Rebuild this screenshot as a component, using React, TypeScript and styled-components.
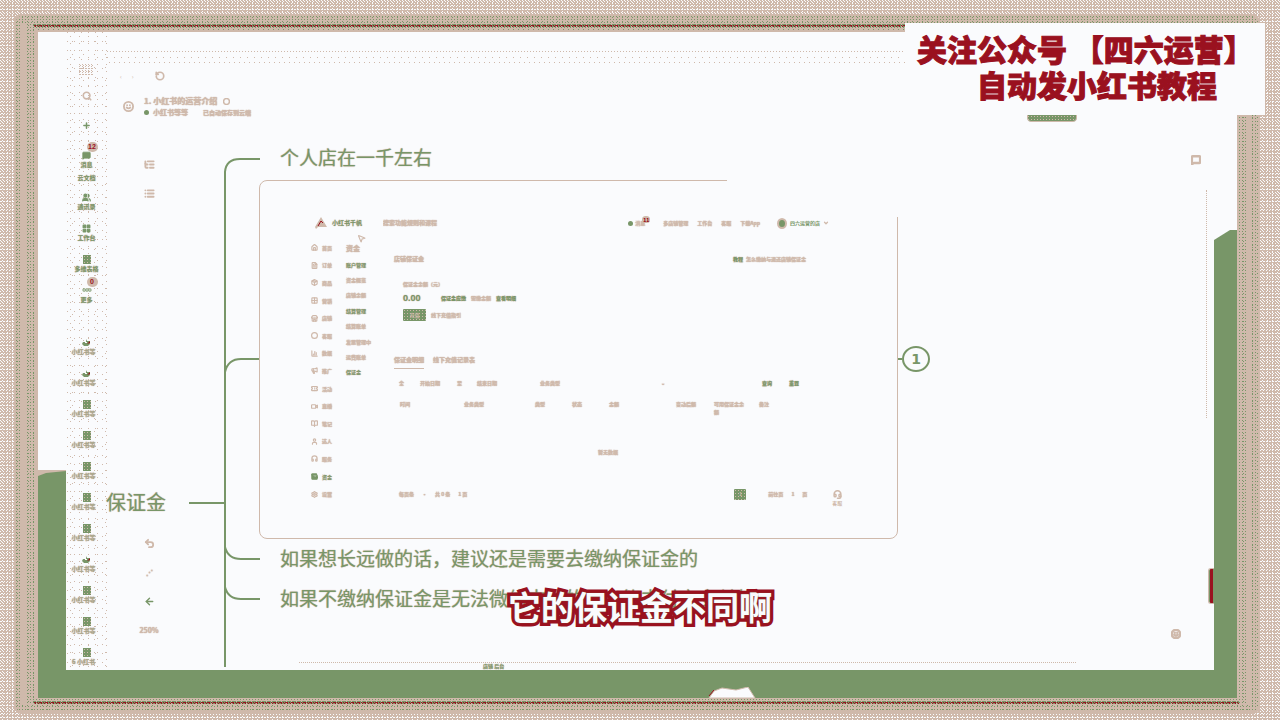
import React from "react";
import styled, { createGlobalStyle, css } from "styled-components";
import {
  Search, Plus, Undo2, ArrowLeft, ListTree, List, Users, LayoutGrid, Home, FileText, Package, Grid2x2,
  Store, Circle, BarChart3, Megaphone, Ticket, Video, BookOpen, User, Headphones, Wallet, Settings,
  MessageSquare, ChevronDown, Headset, Ellipsis, MousePointer2, RotateCcw, Smile,
} from "lucide-react";

const paper = "#fafbfd";
const tan = "#cfb9ab";
const green = "#789668";
const red = "#9a111f";

const dot = (c: string) => `conic-gradient(from 270deg at 1px 1px, ${c} 90deg, transparent 0)`;

const GlobalStyle = createGlobalStyle`
  * { box-sizing: border-box; }
  body { margin: 0; background: ${tan}; font-family: "Noto Sans CJK SC", sans-serif; color: ${tan}; }
  button, input { font: inherit; color: inherit; background: none; border: 0; padding: 0; margin: 0; }
  button { display: inline-flex; align-items: center; justify-content: center; }
  h1, h2, p, ul { margin: 0; padding: 0; list-style: none; font-weight: inherit; font-size: inherit; }
  svg { display: block; flex: none; }
`;

/* ---------- frame ---------- */
const greenDots = css`
  background-color: ${tan};
  background-image: ${dot(green)}, ${dot(green)};
  background-size: 3px 3px, 5px 4px;
  background-position: 0 0, 1px 1px;
`;
const tiny = css`
  text-shadow: 0 0 1px ${tan}, 0 0 1px ${tan};
`;
const Page = styled.div`
  position: relative;
  display: grid;
  min-height: 100vh;
  padding: 14px 20px 6px 14px;
  background-color: ${tan};
  background-image: ${dot(paper)}, ${dot(paper)}, ${dot(paper)};
  background-size: 3px 3px, 3px 4px, 5px 3px;
  background-position: 0 0, 1px 1px, 2px 2px;
`;
const OuterRing = styled.div`
  display: grid;
  ${greenDots}
  border: 2px solid ${tan};
  border-radius: 8px;
  padding: 8px 7px 8px 6px;
`;
const InnerRing = styled.div`
  display: grid;
  ${greenDots}
  background-clip: padding-box;
  border: 0 solid ${tan};
  border-width: 0 4px 0 5px;
  padding: 0 8px 0 7px;
`;
const RedLine = styled.div`
  height: 3px;
  background-color: ${green};
  background-image: ${dot(red)}, ${dot(red)}, ${dot(red)}, ${dot(tan)};
  background-size: 3px 3px, 3px 3px, 2px 3px, 5px 2px;
  background-position: 0 1px, 1px 2px, 1px 1px, 2px 0;
`;
const InnerGrid = styled.div`
  display: grid;
  grid-template-rows: 3px 1fr 3px;
  row-gap: 3px;
`;
const Desk = styled.div`
  display: grid;
  grid-template-columns: 28px 1fr 23px;
  background: ${green};
  border: 2px solid ${tan};
  border-width: 2px 2px 0 4px;
  padding-bottom: 28px;
`;
const Side = styled.div<{ $left?: boolean }>`
  display: grid;
  grid-template-rows: ${(p) => (p.$left ? "438px" : "198px")} auto;
  background: linear-gradient(${paper} ${(p) => (p.$left ? "438px" : "198px")}, ${green} 0);
`;
const EdgeShape = styled.svg`
  grid-row: 2;
  width: 100%;
  height: 10px;
`;
const Hill = styled.svg`
  position: absolute;
  left: 708px;
  bottom: 21px;
`;

/* ---------- window ---------- */
const Window = styled.main`
  display: grid;
  grid-template-columns: 41px 1fr;
  background: ${paper};
`;
const Rail = styled.nav`
  display: flex;
  flex-direction: column;
  align-items: center;
  padding: 32px 0 3px;
  background-image: ${dot(tan)}, ${dot(tan)}, ${dot(tan)};
  background-size: 7px 9px, 9px 7px, 11px 13px;
  background-position: 1px 18px, 4px 4px, 6px 9px;
`;
const RailButton = styled.button<{ $gap: number }>`
  width: 12px;
  height: 10px;
  margin-bottom: ${(p) => p.$gap}px;
`;
const Brand = styled.div`
  width: 15px;
  height: 12px;
  margin-bottom: 15px;
  background-image: ${dot(tan)}, ${dot(tan)};
  background-size: 3px 2px, 3px 3px;
  background-position: 0 0, 1px 1px;
`;
const EntryGroup = styled.div<{ $gap: number }>`
  display: flex;
  flex-direction: column;
  gap: 11px;
  align-items: center;
  margin-bottom: ${(p) => p.$gap}px;
`;
const Entry = styled.button`
  position: relative;
  flex-direction: column;
  width: 40px;
  height: 20px;
  color: ${green};
`;
const EntryLabel = styled.span<{ $soft?: boolean }>`
  padding-right: ${(p) => (p.$soft ? 6 : 0)}px;
  font-size: 6px;
  line-height: 10px;
  font-weight: 700;
  white-space: nowrap;
  color: ${(p) => (p.$soft ? "#a6a58a" : green)};
  ${tiny}
`;
const IconBox = styled.span`
  display: grid;
  place-items: center;
  height: 10px;
`;
const Doc = styled.span`
  width: 8px;
  height: 9px;
  background-color: ${green};
  background-image: ${dot(tan)};
  background-size: 3px 3px;
  background-position: 1px 1px;
`;
const Badge = styled.span`
  position: absolute;
  top: -8px;
  left: 20px;
  min-width: 11px;
  height: 10px;
  border-radius: 5px;
  background: ${tan};
  color: ${red};
  font: 700 7px/10px "Liberation Sans", sans-serif;
  text-align: center;
`;

const Canvas = styled.section`
  position: relative;
  display: flex;
  flex-direction: column;
  min-width: 0;
  padding-top: 38px;
  background-image: ${dot(tan)}, ${dot(tan)}, ${dot(tan)};
  background-size: 3px 6px, 7px 6px, 5px 6px;
  background-repeat: repeat-x;
  background-position: 0 19px, 0 25px, 2px 30px;
`;
const TopRow = styled.div`
  display: flex;
  gap: 10px;
  align-items: center;
  height: 12px;
  padding-left: 13px;
  font-size: 6px;
`;
const Refresh = styled.button`
  margin-left: 11px;
`;
const DocRow = styled.header`
  display: flex;
  gap: 10px;
  align-items: center;
  margin-top: 13px;
  padding-left: 16px;
`;
const DocLines = styled.div`
  font-weight: 700;
  ${tiny}
`;
const DocLine = styled.div<{ $small?: boolean }>`
  display: flex;
  gap: ${(p) => (p.$small ? 4 : 6)}px;
  align-items: center;
  font-size: ${(p) => (p.$small ? 7 : 8)}px;
  line-height: ${(p) => (p.$small ? 11 : 12)}px;
`;
const Saved = styled.span`
  margin-left: 11px;
  font-size: 6px;
`;
const Tools = styled.div`
  display: flex;
  flex: 1;
  flex-direction: column;
  justify-content: space-between;
  width: 84px;
  padding: 41px 0 35px;
`;
const ToolGroup = styled.div`
  display: flex;
  flex-direction: column;
  align-items: center;
  gap: 19px;
`;
const Tool = styled.button<{ $green?: boolean }>`
  height: 10px;
  font-size: 7px;
  line-height: 10px;
  font-weight: 700;
  color: ${(p) => (p.$green ? green : tan)};
  ${tiny}
`;

/* ---------- mind map ---------- */
const Branches = styled.svg`
  position: absolute;
  left: 0;
  top: 0;
`;
const Topic = styled.p<{ $x: number; $y: number; $root?: boolean }>`
  position: absolute;
  left: ${(p) => p.$x}px;
  top: ${(p) => p.$y}px;
  font-size: ${(p) => (p.$root ? 20 : 19)}px;
  line-height: 24px;
  white-space: nowrap;
  color: ${green};
  text-shadow: 0 0 1px ${tan}, 0 0 1px ${tan};
`;
const Count = styled.button`
  position: absolute;
  left: 795px;
  top: 314px;
  width: 28px;
  height: 26px;
  border: 2px solid ${green};
  border-radius: 50%;
  color: ${green};
  font: 700 14px/20px "DejaVu Sans", sans-serif;
  &::before {
    content: "";
    position: absolute;
    left: -6px;
    top: 10px;
    width: 4px;
    height: 2px;
    background: ${green};
  }
`;
const Card = styled.article`
  position: absolute;
  left: 152px;
  top: 148px;
  display: flex;
  flex-direction: column;
  width: 639px;
  height: 359px;
  padding-top: 36px;
  border: 1px solid ${tan};
  border-radius: 8px;
  font-size: 5px;
  line-height: 10px;
  font-weight: 700;
  white-space: nowrap;
  ${tiny}
  &::after {
    content: "";
    position: absolute;
    right: -1px;
    top: -1px;
    width: 171px;
    height: 37px;
    background: ${paper};
  }
`;
const ShopBar = styled.div`
  display: flex;
  align-items: center;
  height: 12px;
  padding: 0 68px 0 55px;
`;
const ShopName = styled.span`
  margin: 0 21px 0 5px;
  font-size: 6px;
  color: ${green};
`;
const ShopSearch = styled.input`
  width: 70px;
  height: 10px;
  font-size: 6px;
  text-shadow: inherit;
  &::placeholder { color: ${tan}; opacity: 1; }
`;
const ShopNav = styled.div`
  display: flex;
  gap: 9px;
  align-items: center;
  margin-left: auto;
`;
const Notice = styled.span`
  position: relative;
  display: flex;
  gap: 2px;
  align-items: center;
  margin-right: 9px;
`;
const Dot = styled.i`
  width: 5px;
  height: 5px;
  border-radius: 50%;
  background: ${green};
`;
const NoticeBadge = styled.b`
  position: absolute;
  left: 14px;
  top: -2px;
  width: 8px;
  height: 7px;
  border-radius: 4px;
  background: ${tan};
  color: ${red};
  font-size: 5px;
  line-height: 7px;
  text-align: center;
`;
const Account = styled.button`
  gap: 3px;
  margin-left: 8px;
  font-size: 5px;
  color: ${green};
`;
const Avatar = styled.i`
  width: 10px;
  height: 11px;
  border: 2px solid ${tan};
  border-radius: 50%;
  background: ${green};
`;
const ShopBody = styled.div`
  display: flex;
  padding: 10px 0 0 51px;
`;
const Menu = styled.ul`
  display: grid;
  grid-auto-rows: 1fr;
  width: 35px;
  height: 264px;
`;
const MenuItem = styled.li<{ $on?: boolean }>`
  display: flex;
  gap: 4px;
  align-items: center;
  color: ${(p) => (p.$on ? green : tan)};
`;
const SubMenu = styled.div`
  width: 48px;
`;
const SubTitle = styled.h2`
  font-size: 7px;
  line-height: 18px;
`;
const SubList = styled.ul`
  display: grid;
  grid-auto-rows: 1fr;
  align-items: center;
  height: 123px;
`;
const SubItem = styled.li<{ $head?: boolean }>`
  color: ${(p) => (p.$head ? green : tan)};
`;
const Panel = styled.div`
  width: 450px;
  padding-top: 15px;
`;
const PanelHead = styled.div`
  display: flex;
  justify-content: space-between;
  padding-right: 38px;
  font-size: 6px;
`;
const Guide = styled.span`
  display: flex;
  gap: 3px;
  font-size: 5px;
`;
const Strong = styled.b`
  color: ${green};
`;
const Balance = styled.div`
  padding: 15px 0 0 9px;
`;
const Line = styled.div<{ $gap: number; $top: number }>`
  display: flex;
  gap: ${(p) => p.$gap}px;
  align-items: center;
  height: 12px;
  margin-top: ${(p) => p.$top}px;
`;
const Amount = styled.b`
  width: 33px;
  font: 700 9px/12px "Liberation Sans", sans-serif;
  color: ${green};
`;
const Pay = styled.button<{ $square?: boolean }>`
  width: ${(p) => (p.$square ? 12 : 23)}px;
  height: ${(p) => (p.$square ? 11 : 12)}px;
  border-radius: 1px;
  background-color: ${green};
  background-image: ${dot(tan)};
  background-size: 3px 3px;
  background-position: 1px 1px;
  color: ${tan};
  font-size: 5px;
  text-shadow: none;
`;
const Tabs = styled.div`
  display: flex;
  gap: 9px;
  margin-top: 34px;
`;
const Tab = styled.button<{ $on?: boolean }>`
  height: 14px;
  padding-bottom: 3px;
  border-bottom: 1px solid ${(p) => (p.$on ? tan : "transparent")};
  font-size: 6px;
  text-shadow: inherit;
`;
const Filters = styled.div`
  display: grid;
  grid-template-columns: 21px 37px 20px 63px 121px 101px 27px 1fr;
  margin-top: 9px;
  padding-left: 5px;
`;
const Records = styled.table`
  width: 416px;
  margin: 12px 0 0 6px;
  border-spacing: 0;
  table-layout: fixed;
  line-height: 8px;
  th { padding: 0 13px 0 0; text-align: left; vertical-align: top; white-space: normal; }
  td { height: 72px; padding: 0; text-align: center; font-size: 5px; }
`;
const Pager = styled.div`
  display: flex;
  align-items: center;
  gap: 8px;
  margin-top: -6px;
  padding-left: 5px;
`;
const PagerAction = styled.span`
  display: flex;
  align-items: center;
  gap: 8px;
  margin-left: 259px;
`;
const Spaced = styled.span`
  margin-left: 14px;
`;
const Help = styled.button`
  flex-direction: column;
  margin: 8px 0 0 17px;
  font-size: 5px;
  line-height: 7px;
`;
const Pointer = styled.span`
  position: absolute;
  left: 97px;
  top: 53px;
`;

/* ---------- overlays ---------- */
const Corner = styled.button<{ $right: number; $top: number }>`
  position: absolute;
  right: ${(p) => p.$right}px;
  top: ${(p) => p.$top}px;
`;
const Share = styled.button`
  position: absolute;
  right: 137px;
  top: 68px;
  width: 50px;
  height: 22px;
  border: 1px solid ${tan};
  border-radius: 4px;
  background-color: ${green};
  background-image: ${dot(tan)};
  background-size: 3px 3px;
`;
const ScrollTrack = styled.i`
  position: absolute;
  right: 7px;
  top: 158px;
  height: 228px;
  border-left: 1px dotted ${tan};
`;
const SideTab = styled.i`
  position: absolute;
  right: 0;
  top: 536px;
  width: 6px;
  height: 36px;
  border: 1px solid ${tan};
  border-right: 0;
  border-radius: 3px 0 0 3px;
  background: linear-gradient(90deg, ${green} 1px, ${red} 1px 4px, ${green} 4px);
`;
const NextCard = styled.div`
  position: absolute;
  left: 192px;
  right: 138px;
  bottom: 0;
  height: 8px;
  padding-left: 184px;
  border-top: 1px dotted ${tan};
  font-size: 5px;
  line-height: 6px;
  font-weight: 700;
  color: ${green};
  ${tiny}
`;
const Banner = styled.aside`
  position: absolute;
  top: 23px;
  right: 15px;
  width: 360px;
  height: 92px;
  padding: 7px 0 0 12px;
  background: ${paper};
  color: ${red};
  font-size: 30px;
  line-height: 36px;
  font-weight: 900;
  white-space: nowrap;
  -webkit-text-stroke: 1px ${red};
`;
const BannerLine = styled.p<{ $indent?: boolean }>`
  padding-left: ${(p) => (p.$indent ? 60 : 0)}px;
`;
const Caption = styled.p`
  position: absolute;
  left: 0;
  right: 0;
  bottom: 94px;
  text-align: center;
  font-size: 33px;
  line-height: 40px;
  font-weight: 700;
  color: ${paper};
  paint-order: stroke fill;
  -webkit-text-stroke: 7px ${red};
  text-shadow: 0 0 1px ${green};
`;

const Swirl = () => (
  <svg width="9" height="9" viewBox="0 0 9 9">
    <path d="M1 4h3V1l1 2 3 0v3L6 8H2L0 6z" fill={green} />
    <path d="M8 3v2L5 6z" fill={red} />
    <path d="M3 4h2v1H3z" fill={paper} />
  </svg>
);

const files = [1, 1, 0, 0, 0, 0, 0, 1, 0, 0, 0];
const menu = [
  ["首页", Home], ["订单", FileText], ["商品", Package], ["营销", Grid2x2], ["店铺", Store],
  ["客服", Circle], ["数据", BarChart3], ["推广", Megaphone], ["活动", Ticket], ["直播", Video],
  ["笔记", BookOpen], ["达人", User], ["服务", Headphones], ["资金", Wallet], ["设置", Settings],
] as const;
const sub: [string, boolean][] = [
  ["账户管理", true], ["资金概览", false], ["店铺余额", false], ["结算管理", true],
  ["结算账单", false], ["发票管理中", false], ["运费账单", false], ["保证金", true],
];
const columns: [string, number][] = [
  ["时间", 64], ["业务类型", 71], ["类型", 37], ["状态", 37], ["金额", 67], ["变动后额", 38], ["可用保证金余额", 45], ["备注", 57],
];

export default function App() {
  return (
    <Page>
      <GlobalStyle />
      <OuterRing>
        <InnerRing>
          <InnerGrid>
            <RedLine />
            <Desk>
              <Side $left>
                <EdgeShape viewBox="0 0 28 10" preserveAspectRatio="none">
                  <path d="M0 0H28V1L8 3L0 6z" fill={tan} />
                </EdgeShape>
              </Side>
              <Window>
                <Rail>
                  <Brand />
                  <RailButton $gap={19} aria-label="搜索"><Search size={10} strokeWidth={4} /></RailButton>
                  <RailButton $gap={20} aria-label="新建"><Plus size={9} strokeWidth={4} color={green} /></RailButton>
                  <EntryGroup $gap={3}>
                    <Entry>
                      <IconBox><MessageSquare size={9} fill={green} /></IconBox>
                      <EntryLabel>消息</EntryLabel>
                      <Badge>12</Badge>
                    </Entry>
                  </EntryGroup>
                  <EntryGroup $gap={9}><EntryLabel>云文档</EntryLabel></EntryGroup>
                  <EntryGroup $gap={32}>
                    <Entry><IconBox><Users size={9} fill={green} strokeWidth={3} /></IconBox><EntryLabel>通讯录</EntryLabel></Entry>
                    <Entry><IconBox><LayoutGrid size={9} fill={green} strokeWidth={3} /></IconBox><EntryLabel>工作台</EntryLabel></Entry>
                    <Entry><IconBox><Doc /></IconBox><EntryLabel>多维表格</EntryLabel></Entry>
                    <Entry>
                      <IconBox><Ellipsis size={10} strokeWidth={6} /></IconBox>
                      <EntryLabel>更多</EntryLabel>
                      <Badge>0</Badge>
                    </Entry>
                  </EntryGroup>
                  <EntryGroup $gap={0}>
                    {files.map((swirl, i) => (
                      <Entry key={i}>
                        <IconBox>{swirl ? <Swirl /> : <Doc />}</IconBox>
                        <EntryLabel $soft>{i === files.length - 1 ? "6 小红书" : "小红书等"}</EntryLabel>
                      </Entry>
                    ))}
                  </EntryGroup>
                </Rail>

                <Canvas>
                  <TopRow>
                    <span>‹</span><span>›</span>
                    <Refresh aria-label="刷新"><RotateCcw size={10} strokeWidth={4} /></Refresh>
                  </TopRow>
                  <DocRow>
                    <Smile size={11} strokeWidth={4} />
                    <DocLines>
                      <DocLine>1. 小红书的运营介绍<Circle size={7} strokeWidth={5} /></DocLine>
                      <DocLine $small><Dot />小红书等等<Saved>已自动保存到云端</Saved></DocLine>
                    </DocLines>
                  </DocRow>
                  <Tools>
                    <ToolGroup>
                      <Tool aria-label="大纲"><ListTree size={11} strokeWidth={4} /></Tool>
                      <Tool aria-label="列表"><List size={11} strokeWidth={4} /></Tool>
                    </ToolGroup>
                    <ToolGroup>
                      <Tool aria-label="撤销"><Undo2 size={11} strokeWidth={4} /></Tool>
                      <Tool>⋰</Tool>
                      <Tool $green aria-label="返回"><ArrowLeft size={11} strokeWidth={3} /></Tool>
                      <Tool>250%</Tool>
                    </ToolGroup>
                  </Tools>

                  <Branches width="160" height="638" viewBox="107 32 160 638" fill="none" stroke={green} strokeWidth="2">
                    <path d="M225 667V172Q226 159 240 159H260M225 372Q228 359 241 359H259M189 503H225M225 547Q228 559 241 559H260M225 587Q228 599 241 599H260" />
                  </Branches>
                  <Topic $root $x={-1} $y={458}>保证金</Topic>
                  <Topic $x={173} $y={113}>个人店在一千左右</Topic>
                  <Topic $x={173} $y={514}>如果想长远做的话，建议还是需要去缴纳保证金的</Topic>
                  <Topic $x={173} $y={554}>如果不缴纳保证金是无法微信支付的，只能支付宝支付的</Topic>

                  <Card>
                    <ShopBar>
                      <svg width="12" height="12" viewBox="0 0 12 12">
                        <path d="M6 0L12 10H3L1 12L0 10z" fill={tan} />
                        <path d="M3 9L6 4L8 6" stroke={red} fill="none" />
                      </svg>
                      <ShopName>小红书千帆</ShopName>
                      <ShopSearch aria-label="搜索" placeholder="搜索功能规则和课程" />
                      <ShopNav>
                        <Notice><Dot />消息<NoticeBadge>11</NoticeBadge></Notice>
                        <span>多店铺管理</span><span>工作台</span><span>客服</span><span>下载App</span>
                        <Account><Avatar />四六运营的店<ChevronDown size={6} color={tan} strokeWidth={5} /></Account>
                      </ShopNav>
                    </ShopBar>
                    <ShopBody>
                      <Menu>
                        {menu.map(([name, Icon]) => (
                          <MenuItem key={name} $on={name === "资金"}>
                            <Icon size={7} strokeWidth={4} fill={name === "资金" ? green : "none"} />{name}
                          </MenuItem>
                        ))}
                      </Menu>
                      <SubMenu>
                        <SubTitle>资金</SubTitle>
                        <SubList>
                          {sub.map(([name, head]) => <SubItem key={name} $head={head}>{name}</SubItem>)}
                        </SubList>
                      </SubMenu>
                      <Panel>
                        <PanelHead>
                          <h2>店铺保证金</h2>
                          <Guide><Strong>教程</Strong><span>怎么缴纳与退还店铺保证金</span></Guide>
                        </PanelHead>
                        <Balance>
                          <span>保证金余额（元）</span>
                          <Line $gap={5} $top={3}>
                            <Amount>0.00</Amount>
                            <Strong>保证金应缴</Strong><span>需缴金额</span><Strong>查看明细</Strong>
                          </Line>
                          <Line $gap={5} $top={5}><Pay>充值</Pay><span>线下充值指引</span></Line>
                        </Balance>
                        <Tabs><Tab $on>保证金明细</Tab><Tab>线下充值记录表</Tab></Tabs>
                        <Filters>
                          <span>全</span><span>开始日期</span><span>至</span><span>结束日期</span><span>业务类型</span><span>⌄</span><Strong>查询</Strong><Strong>重置</Strong>
                        </Filters>
                        <Records>
                          <colgroup>{columns.map(([n, w]) => <col key={n} width={w} />)}</colgroup>
                          <thead><tr>{columns.map(([n]) => <th key={n}>{n}</th>)}</tr></thead>
                          <tbody><tr><td colSpan={8}>暂无数据</td></tr></tbody>
                        </Records>
                        <Pager>
                          <span>每页条</span><span>·</span><span>共 0 条</span><span>1 页</span>
                          <PagerAction>
                            <Pay $square>1</Pay>
                            <Spaced>前往页</Spaced><span>1</span><span>页</span>
                          </PagerAction>
                          <Help><Headset size={9} strokeWidth={4} />客服</Help>
                        </Pager>
                      </Panel>
                    </ShopBody>
                    <Pointer><MousePointer2 size={9} strokeWidth={3} /></Pointer>
                  </Card>
                  <Count>1</Count>

                  <Share aria-label="分享" />
                  <Corner $right={13} $top={123} aria-label="评论"><MessageSquare size={10} strokeWidth={6} /></Corner>
                  <Corner $right={33} $top={597} aria-label="帮助"><Smile size={10} strokeWidth={6} /></Corner>
                  <ScrollTrack />
                  <SideTab />
                  <NextCard>店铺 后台</NextCard>
                </Canvas>
              </Window>
              <Side>
                <EdgeShape viewBox="0 0 23 10" preserveAspectRatio="none">
                  <path d="M0 0H16L0 10z" fill={paper} />
                </EdgeShape>
              </Side>
            </Desk>
            <RedLine />
          </InnerGrid>
        </InnerRing>
      </OuterRing>
      <Hill width="48" height="12" viewBox="0 0 48 12">
        <path d="M1 11L6 4L14 1L28 3L40 0L47 11z" fill={paper} stroke={tan} />
        <path d="M1 9L6 3" stroke={red} />
      </Hill>
      <Banner>
        <BannerLine>关注公众号 【四六运营】</BannerLine>
        <BannerLine $indent>自动发小红书教程</BannerLine>
      </Banner>
      <Caption>它的保证金不同啊</Caption>
    </Page>
  );
}
